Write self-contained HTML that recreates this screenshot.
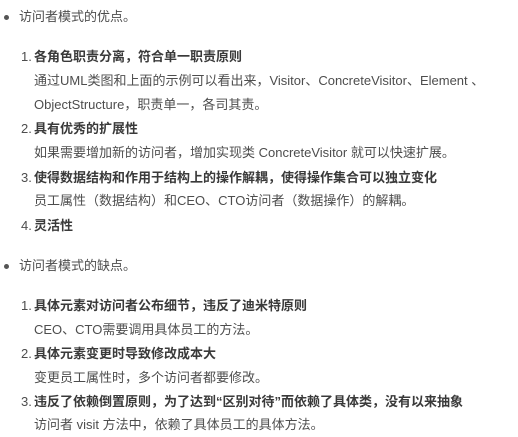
<!DOCTYPE html>
<html><head><meta charset="utf-8"><style>
body{margin:0;width:518px;height:436px;background:#fff;position:relative;overflow:hidden;font-family:"Liberation Sans","Noto Sans CJK SC",sans-serif;font-size:13px;color:#4d4d4d}
.l{position:absolute;line-height:24px;white-space:nowrap}
b{color:#3a3a3a;font-weight:bold}
.dot{position:absolute;width:5px;height:5px;border-radius:50%;background:#555;left:4px}
.n{position:absolute;left:21px;line-height:24px}
</style></head><body>
<div class="dot" style="top:15px"></div>
<div class="l" style="left:19px;top:5px">访问者模式的优点。</div>
<div class="n" style="top:45px">1.</div><div class="l" style="left:34px;top:45px"><b>各角色职责分离，符合单一职责原则</b></div>
<div class="l" style="left:34px;top:69px">通过UML类图和上面的示例可以看出来，Visitor、ConcreteVisitor、Element 、</div>
<div class="l" style="left:34px;top:93px">ObjectStructure，职责单一，各司其责。</div>
<div class="n" style="top:117px">2.</div><div class="l" style="left:34px;top:117px"><b>具有优秀的扩展性</b></div>
<div class="l" style="left:34px;top:141px">如果需要增加新的访问者，增加实现类 ConcreteVisitor 就可以快速扩展。</div>
<div class="n" style="top:166px">3.</div><div class="l" style="left:34px;top:166px"><b>使得数据结构和作用于结构上的操作解耦，使得操作集合可以独立变化</b></div>
<div class="l" style="left:34px;top:189px">员工属性（数据结构）和CEO、CTO访问者（数据操作）的解耦。</div>
<div class="n" style="top:214px">4.</div><div class="l" style="left:34px;top:214px"><b>灵活性</b></div>
<div class="dot" style="top:264px"></div>
<div class="l" style="left:19px;top:254px">访问者模式的缺点。</div>
<div class="n" style="top:294px">1.</div><div class="l" style="left:34px;top:294px"><b>具体元素对访问者公布细节，违反了迪米特原则</b></div>
<div class="l" style="left:34px;top:318px">CEO、CTO需要调用具体员工的方法。</div>
<div class="n" style="top:342px">2.</div><div class="l" style="left:34px;top:342px"><b>具体元素变更时导致修改成本大</b></div>
<div class="l" style="left:34px;top:366px">变更员工属性时，多个访问者都要修改。</div>
<div class="n" style="top:390px">3.</div><div class="l" style="left:34px;top:390px"><b>违反了依赖倒置原则，为了达到“区别对待”而依赖了具体类，没有以来抽象</b></div>
<div class="l" style="left:34px;top:413px">访问者 visit 方法中，依赖了具体员工的具体方法。</div>
</body></html>
